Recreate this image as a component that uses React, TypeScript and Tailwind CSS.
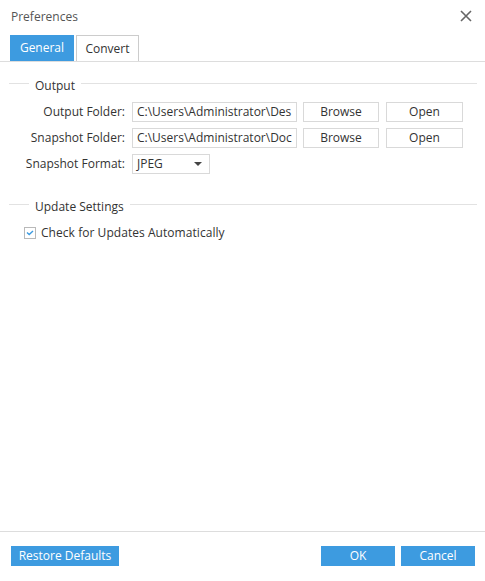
import React, { useState } from 'react';

const font = { fontFamily: '"Open Sans", Tahoma, sans-serif' };

const SectionHeader: React.FC<{ title: string }> = ({ title }) => (
  <div className="flex items-center h-[18px] pl-[9px] pr-[8px]">
    <div className="w-[20px] h-px bg-[#e2e2e2]" />
    <span className="px-[6px] pt-[5px] text-[12px] text-[#333] leading-none">{title}</span>
    <div className="flex-1 h-px bg-[#e2e2e2]" />
  </div>
);

const FolderRow: React.FC<{ label: string; path: string }> = ({ label, path }) => (
  <div className="flex items-center h-[20px] pl-[9px]">
    <label className="w-[116px] text-right text-[12px] text-[#333]">{label}</label>
    <div className="ml-[7px] w-[165px] h-[20px] border border-[#d9d9d9] px-[4px] text-[12px] text-[#333] leading-[18px] whitespace-nowrap">
      {path}
    </div>
    <button className="ml-[6px] w-[76px] h-[20px] border border-[#d9d9d9] text-[12px] text-[#333] bg-white">
      Browse
    </button>
    <button className="ml-[7px] w-[77px] h-[20px] border border-[#d9d9d9] text-[12px] text-[#333] bg-white">
      Open
    </button>
  </div>
);

const App: React.FC = () => {
  const [tab, setTab] = useState<'general' | 'convert'>('general');
  const [autoUpdate, setAutoUpdate] = useState(true);

  return (
    <div className="w-[485px] h-[581px] bg-white flex flex-col" style={font}>
      {/* Title bar */}
      <div className="h-[35px] flex items-start justify-between pl-[11px] pr-[13px] pt-[8px]">
        <span className="text-[12px] text-[#555]">Preferences</span>
        <svg width="12" height="12" viewBox="0 0 12 12" className="mt-[2px]">
          <path d="M1 1 L11 11 M11 1 L1 11" stroke="#666" strokeWidth="1.6" />
        </svg>
      </div>

      {/* Tabs */}
      <div className="flex items-end gap-[2px] pl-[10px] h-[27px] border-b border-[#dddddd]">
        <button
          onClick={() => setTab('general')}
          className={
            tab === 'general'
              ? 'w-[64px] h-[26px] bg-[#3d9be0] text-white text-[12px]'
              : 'w-[64px] h-[26px] bg-white border border-b-0 border-[#cccccc] text-[#333] text-[12px]'
          }
        >
          General
        </button>
        <button
          onClick={() => setTab('convert')}
          className={
            tab === 'convert'
              ? 'w-[63px] h-[26px] bg-[#3d9be0] text-white text-[12px]'
              : 'w-[63px] h-[26px] bg-white border border-b-0 border-[#cccccc] text-[#333] text-[12px]'
          }
        >
          Convert
        </button>
      </div>

      {/* Content */}
      <div className="flex-1 flex flex-col">
        <div className="mt-[12px]">
          <SectionHeader title="Output" />
        </div>
        <div className="mt-[10px] flex flex-col gap-[6px]">
          <FolderRow label="Output Folder:" path="C:\Users\Administrator\Des" />
          <FolderRow label="Snapshot Folder:" path="C:\Users\Administrator\Doc" />
          <div className="flex items-center h-[20px] pl-[9px]">
            <label className="w-[116px] text-right text-[12px] text-[#333]">Snapshot Format:</label>
            <div className="ml-[7px] w-[78px] h-[20px] border border-[#d9d9d9] pl-[4px] pr-[7px] flex items-center justify-between text-[12px] text-[#333]">
              <span>JPEG</span>
              <svg width="8" height="4" viewBox="0 0 8 4">
                <path d="M0 0 H8 L4 4 Z" fill="#444" />
              </svg>
            </div>
          </div>
        </div>

        <div className="mt-[21px]">
          <SectionHeader title="Update Settings" />
        </div>
        <label className="mt-[11px] ml-[24px] flex items-center gap-[5px] cursor-pointer select-none">
          <span
            onClick={() => setAutoUpdate(!autoUpdate)}
            className="w-[12px] h-[12px] border border-[#b9b9b9] bg-white flex items-center justify-center"
          >
            {autoUpdate && (
              <svg width="8" height="6" viewBox="0 0 8 6">
                <path d="M1 2.5 L3.2 4.6 L7 1" stroke="#3d9be0" strokeWidth="1.4" fill="none" />
              </svg>
            )}
          </span>
          <span className="text-[12px] text-[#333] tracking-[0.05px]">Check for Updates Automatically</span>
        </label>
      </div>

      {/* Footer */}
      <div className="h-[50px] border-t border-[#dddddd] flex items-start justify-between pt-[14px] pl-[11px] pr-[10px]">
        <button className="w-[108px] h-[20px] bg-[#3d9be0] text-white text-[12px]">Restore Defaults</button>
        <div className="flex gap-[6px]">
          <button className="w-[74px] h-[20px] bg-[#3d9be0] text-white text-[12px]">OK</button>
          <button className="w-[74px] h-[20px] bg-[#3d9be0] text-white text-[12px]">Cancel</button>
        </div>
      </div>
    </div>
  );
};

export default App;
